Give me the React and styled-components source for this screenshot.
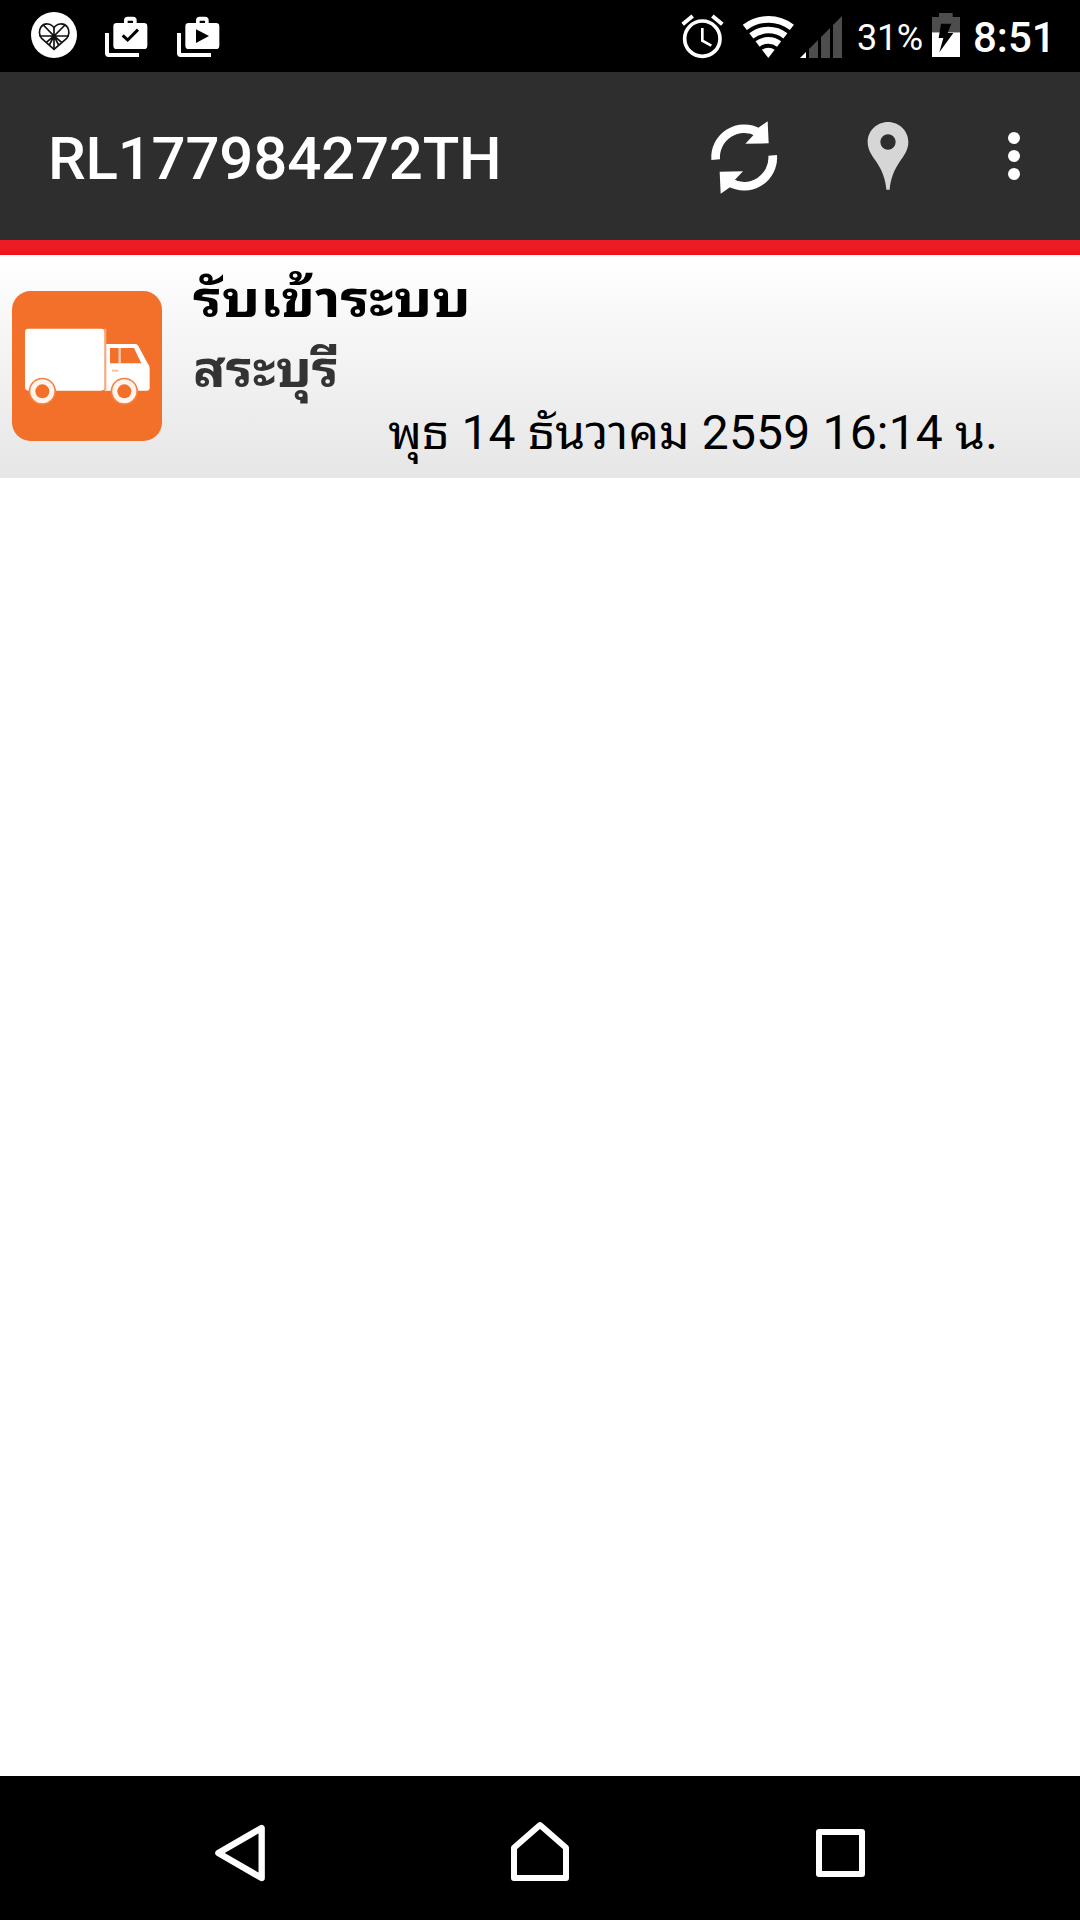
import React from "react";
import styled, { createGlobalStyle } from "styled-components";

const GlobalStyle = createGlobalStyle`
  *, *::before, *::after { box-sizing: border-box; }
  html, body { margin: 0; padding: 0; background: #fff; }
`;

const Screen = styled.div`
  display: flex;
  flex-direction: column;
  width: 1080px;
  height: 1920px;
  overflow: hidden;
  background: #fff;
  font-family: Roboto, "Noto Sans Thai Looped", "Noto Sans", sans-serif;
`;

const StatusBar = styled.div`
  display: flex;
  align-items: center;
  justify-content: space-between;
  flex: none;
  height: 72px;
  padding: 0 30px;
  background: #000;
  color: #fff;
`;

const StatusGroup = styled.div`
  display: flex;
  align-items: center;
`;

const Icon = styled.svg`
  display: block;
  flex: none;
  width: ${(p) => p.$w}px;
  height: ${(p) => p.$h}px;
  margin-left: ${(p) => p.$ml || 0}px;
`;

const Battery = styled.span`
  width: 66px;
  margin: 4px 0 0 15px;
  font-size: 36px;
  line-height: 42px;
  letter-spacing: -0.3px;
  white-space: nowrap;
`;

const Clock = styled.span`
  width: 77px;
  margin: 4px 0 0 13px;
  font-size: 42px;
  font-weight: 500;
  line-height: 50px;
  white-space: nowrap;
`;

const Toolbar = styled.header`
  display: flex;
  align-items: center;
  flex: none;
  height: 168px;
  padding: 0 58px 0 48px;
  background: #2e2e2e;
  color: #fff;
`;

const Title = styled.h1`
  flex: 1;
  margin: 6px 0 0;
  font-size: 60px;
  font-weight: 500;
  line-height: 70px;
  letter-spacing: -0.22px;
  white-space: nowrap;
`;

const Actions = styled.div`
  display: flex;
  align-items: center;
`;

const Accent = styled.div`
  flex: none;
  height: 15px;
  background: linear-gradient(#ed1c24 0%, #ed1c24 55%, #f20d16 100%);
`;

const EventRow = styled.article`
  display: flex;
  flex: none;
  height: 223px;
  padding: 0 12px;
  background: linear-gradient(#ffffff, #e6e6e6);
`;

const Thumb = styled.div`
  flex: none;
  padding-top: 36px;
`;

const EventText = styled.div`
  display: flex;
  flex-direction: column;
  flex: 1;
  height: 223px;
  padding: 10px 70px 0 31px;
`;

const Line = styled.div`
  height: ${(p) => p.$h}px;
  line-height: ${(p) => p.$h}px;
  font-size: ${(p) => p.$size}px;
  color: ${(p) => p.$color || "#000"};
  white-space: nowrap;
`;

const WideLine = styled(Line)`
  font-weight: 700;
  transform: scaleX(${(p) => p.$stretch});
  transform-origin: left center;
`;

const DateLine = styled(Line)`
  letter-spacing: 0.18px;
  text-align: right;
`;

const Content = styled.main`
  flex: 1;
`;

const NavBar = styled.nav`
  display: flex;
  align-items: center;
  justify-content: space-between;
  flex: none;
  height: 144px;
  padding: 0 210px;
  background: #000;
`;

const CasePath = ({ x }) => (
  <g transform={`translate(${x} 0)`}>
    <path
      fill="#fff"
      fillRule="evenodd"
      d="M37 69H57V61Q57 50 68 50H84Q95 50 95 61V69H117Q127 69 127 79V137Q127 147 117 147H35Q25 147 25 137V79Q25 69 35 69ZM68 69H84V62H68Z"
    />
    <path fill="#fff" d="M0 99H12V159H102V171H11Q0 171 0 160Z" />
  </g>
);

const Refresh = () => (
  <Icon $w={70} $h={78} viewBox="90 81 210 234">
    <g id="arrow">
      <path d="M107 209A86 86 0 0 1 236 128" fill="none" stroke="#fff" strokeWidth="26" />
      <path d="M263 94L266 160L196 161L220 136L234 114Z" fill="#fff" />
    </g>
    <use href="#arrow" transform="rotate(180 192.5 202.5)" />
  </Icon>
);

const Truck = () => (
  <Icon $w={150} $h={150} viewBox="36 123 450 450">
    <rect x="36" y="123" width="450" height="450" rx="56" fill="#f3702a" />
    <rect x="75" y="236" width="239" height="186" rx="10" fill="#fff" />
    <path d="M314 282H406Q412 282 415 288L444 342Q449 346 449 356V413Q449 422 440 422H314Z" fill="#fff" />
    <path d="M316 236V420" stroke="#f8a67c" strokeWidth="6" />
    <path d="M330 294H362V340H330ZM362 294H402L424 340H362Z" fill="#f3702a" />
    <path d="M359 294V340" stroke="#fbc9b0" strokeWidth="7" />
    <path d="M336 362H355" stroke="#f9c0a0" strokeWidth="6" />
    {[127, 373].map((cx) => (
      <g key={cx}>
        <circle cx={cx} cy="424" r="41" fill="#f4803f" />
        <circle cx={cx} cy="424" r="36" fill="#fff4ee" />
        <circle cx={cx} cy="424" r="21" fill="#f3702a" />
      </g>
    ))}
  </Icon>
);

export default function App() {
  return (
    <Screen>
      <GlobalStyle />
      <StatusBar>
        <StatusGroup>
          <Icon $w={48} $h={48} viewBox="90 36 144 144">
            <circle cx="162" cy="105" r="69" fill="#fff" />
            <g fill="none" stroke="#111" strokeWidth="5">
              <path d="M162 148L125 115C117 106 116 91 123 81C132 68 153 69 162 83C171 69 192 68 202 81C209 91 208 106 200 115Z" />
              <path d="M162 83V148M118 108H207M130 75L162 108L195 75M162 108L139 127M162 108L185 127M148 135L162 108L176 135" />
            </g>
            <circle cx="162" cy="109" r="7" fill="#111" />
          </Icon>
          <Icon $w={44} $h={48} $ml={26} viewBox="312 36 132 144">
            <CasePath x={315} />
            <path d="M368 106L383 120L414 89" fill="none" stroke="#000" strokeWidth="9" />
          </Icon>
          <Icon $w={44} $h={48} $ml={28} viewBox="528 36 132 144">
            <CasePath x={531} />
            <path d="M588 88V129L627 108Z" fill="#000" />
          </Icon>
        </StatusGroup>
        <StatusGroup>
          <Icon $w={45} $h={48} viewBox="60 36 135 144">
            <g fill="none" stroke="#fff">
              <circle cx="127" cy="116" r="53" strokeWidth="11" />
              <path d="M127 84V122L154 137" strokeWidth="8" />
              <path d="M68 73L98 48M157 48L187 73" strokeWidth="12" />
            </g>
          </Icon>
          <Icon $w={53} $h={48} $ml={17} viewBox="246 36 159 144">
            <g fill="none" stroke="#fff" strokeWidth="20">
              <path d="M254.4 82A116 116 0 0 1 395.6 82" />
              <path d="M273.9 107.4A84 84 0 0 1 376.1 107.4" />
              <path d="M292.7 132A53 53 0 0 1 357.3 132" />
            </g>
            <path d="M325 174L306 149.5A31 31 0 0 1 344 149.5Z" fill="#fff" />
          </Icon>
          <Icon $w={42} $h={48} $ml={5} viewBox="420 36 126 144">
            <path d="M420 174H438V156Z" fill="#fff" />
            <path d="M447 174V147L474 120V174ZM483 174V111L510 84V174ZM519 174V75L546 48V174Z" fill="#4d4d4d" />
          </Icon>
          <Battery>31%</Battery>
          <Icon $w={28} $h={48} $ml={9} viewBox="816 36 84 144">
            <path d="M837 39H878V51H900V97H816V51H837Z" fill="#4d4d4d" />
            <path d="M816 97H900V171H816Z" fill="#fff" />
            <path d="M843 71H874L863 99H880L838 157L850 114H836Z" fill="#000" />
          </Icon>
          <Clock>8:51</Clock>
        </StatusGroup>
      </StatusBar>
      <Toolbar>
        <Title>RL177984272TH</Title>
        <Actions>
          <Refresh />
          <Icon $w={44} $h={78} $ml={86} viewBox="558 81 132 234">
            <path
              fill="#d6d6d6"
              fillRule="evenodd"
              d="M624 96C658 96 685 123 685 156C685 180 672 197 658 217C641 242 631 270 629 299H619C617 270 607 242 590 217C576 197 563 180 563 156C563 123 590 96 624 96ZM624 133A23 23 0 1 0 624 179A23 23 0 1 0 624 133Z"
            />
          </Icon>
          <Icon $w={16} $h={78} $ml={96} viewBox="978 81 48 234">
            {[144, 198, 252].map((cy) => (
              <circle key={cy} cx="1002" cy={cy} r="18" fill="#fff" />
            ))}
          </Icon>
        </Actions>
      </Toolbar>
      <Accent />
      <EventRow>
        <Thumb>
          <Truck />
        </Thumb>
        <EventText>
          <WideLine $h={70} $size={50} $stretch={1.152}>รับเข้าระบบ</WideLine>
          <WideLine $h={70} $size={50} $stretch={1.08} $color="#333">สระบุรี</WideLine>
          <DateLine $h={56} $size={48}>พุธ 14 ธันวาคม 2559 16:14 น.</DateLine>
        </EventText>
      </EventRow>
      <Content />
      <NavBar>
        <Icon $w={60} $h={72} viewBox="90 126 180 216">
          <path d="M115 249L245 174V324Z" fill="none" stroke="#fff" strokeWidth="19" strokeLinejoin="round" />
        </Icon>
        <Icon $w={60} $h={72} viewBox="990 126 180 216">
          <path d="M1002 324V233L1080 165L1158 233V324Z" fill="none" stroke="#fff" strokeWidth="18" strokeLinejoin="round" />
        </Icon>
        <Icon $w={60} $h={72} viewBox="990 126 180 216">
          <rect x="1017" y="186" width="129" height="126" fill="none" stroke="#fff" strokeWidth="18" strokeLinejoin="round" />
        </Icon>
      </NavBar>
    </Screen>
  );
}
